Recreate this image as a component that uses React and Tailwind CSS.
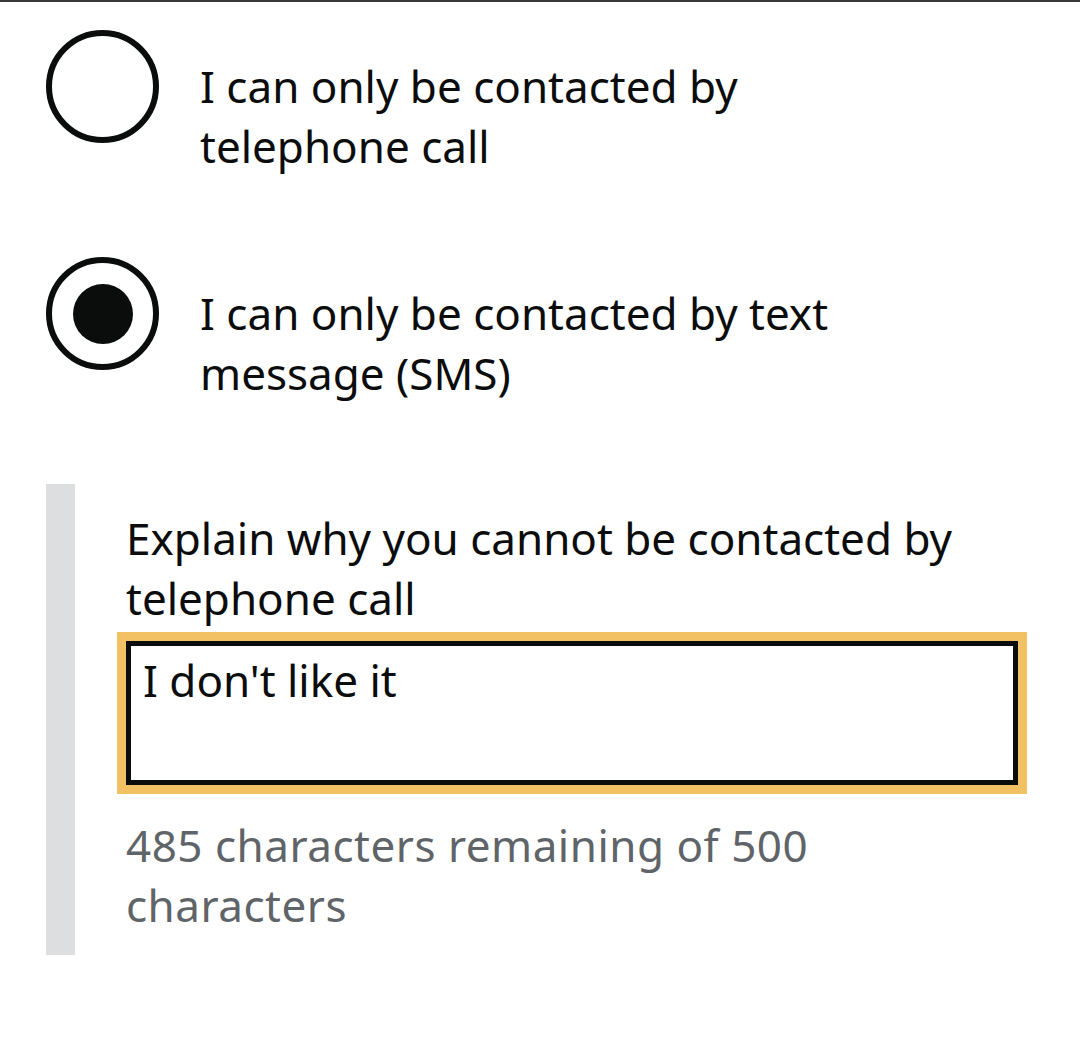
import React from 'react';

// GOV.UK style radio + conditional textarea
function Radio({ checked, children, className = '' }) {
    return (
        <div className={`flex items-start ${className}`}>
            <div className="w-[113px] h-[113px] shrink-0 rounded-full border-[6px] border-[#0b0c0c] flex items-center justify-center">
                {checked && <div className="w-[60px] h-[60px] rounded-full bg-[#0b0c0c]" />}
            </div>
            <div className="ml-[41px] mt-[26px]">{children}</div>
        </div>
    );
}

export default function App() {
    return (
        <div
            className="min-h-[1039px] w-[1080px] bg-white text-[#0b0c0c] text-[44px] leading-[60px] border-t-2 border-[#3a3a3a]"
            style={{ fontFamily: '"Noto Sans", "Open Sans", sans-serif' }}
        >
            <div className="pl-[46px] pt-[28px]">
                <Radio>
                    I can only be contacted by
                    <br />
                    telephone call
                </Radio>
                <Radio checked className="mt-[81px]">
                    I can only be contacted by text
                    <br />
                    message (SMS)
                </Radio>

                <div className="mt-[81px] flex">
                    <div className="w-[29px] shrink-0 bg-[#dcdee0]" />
                    <div className="pl-[51px] pt-[24px] pb-[20px]">
                        <label className="block">
                            Explain why you cannot be contacted by
                            <br />
                            telephone call
                        </label>
                        <div className="mt-[13px] w-[892px] h-[144px] border-[5px] border-[#0b0c0c] outline-[9px] outline-solid outline-[#f1c163] px-[12px] pt-[4px] bg-white">
                            I don't like it
                        </div>
                        <div className="mt-[30px] text-[#5f6468] tracking-[0.5px]">
                            485 characters remaining of 500
                            <br />
                            characters
                        </div>
                    </div>
                </div>
            </div>
        </div>
    );
}
